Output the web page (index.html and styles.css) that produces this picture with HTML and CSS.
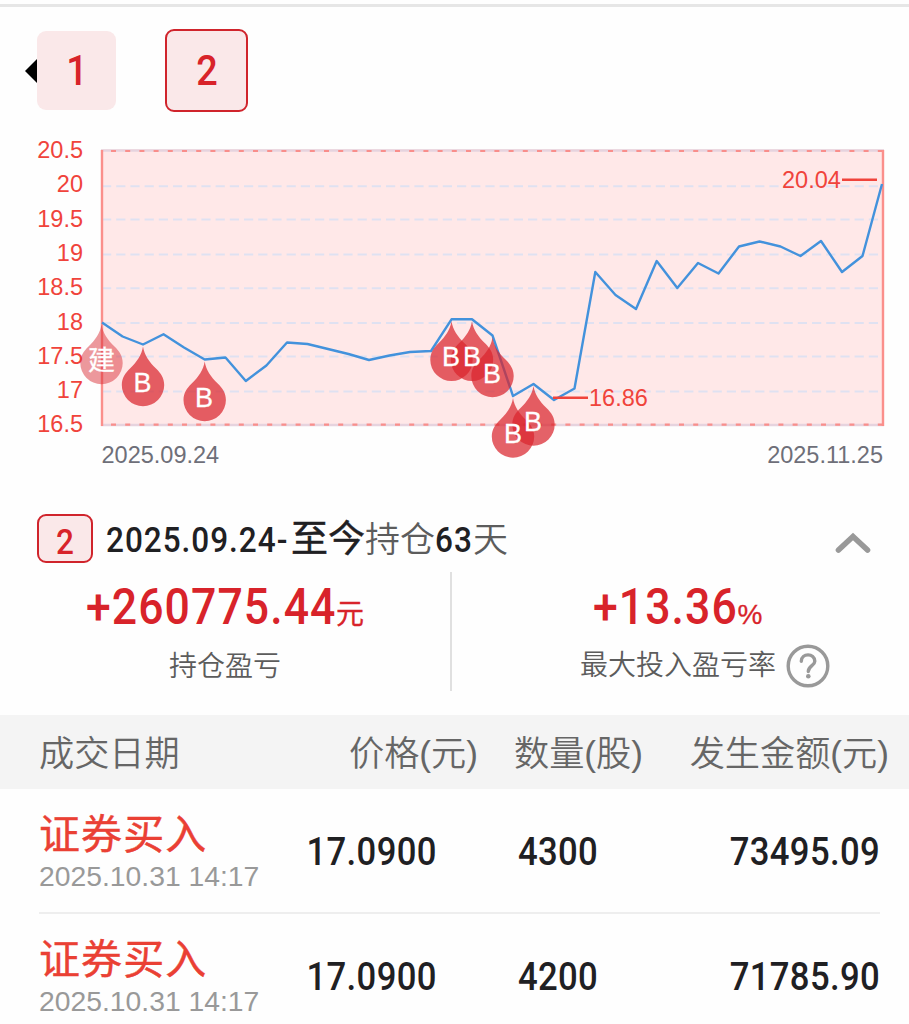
FILE: index.html
```html
<!DOCTYPE html>
<html lang="zh-CN">
<head>
    <meta charset="UTF-8">
    <meta name="viewport" content="width=device-width, initial-scale=1.0">
    <title>持仓详情</title>
    <link rel="stylesheet" href="styles.css">
</head>
<body>
    <div class="top-line"></div>

    <div class="tabs">
        <span class="arrow"></span>
        <div class="tab"><span class="din">1</span></div>
        <div class="tab active"><span class="din">2</span></div>
    </div>

    <svg class="chart" viewBox="0 130 909 350" width="909" height="350">
        <defs>
            <path id="drop" d="M0 2C1.5 11 6 17 13 24C18 29 21.2 33.5 21.2 40.5A21.2 21.2 0 0 1 -21.2 40.5C-21.2 33.5 -18 29 -13 24C-6 17 -1.5 11 0 2Z"/>
        </defs>
        <rect class="plot" x="101" y="149" width="783" height="277"/>
        <path class="grid" d="M102 186.3H882M102 219.5H882M102 254.5H882M102 288.2H882M102 323H882M102 356.5H882M102 391.5H882"/>
        <path class="edge" d="M101 150.5H884M101 425H884"/>
        <path class="edge-dash" d="M111 151H882M111 424.7H882"/>
        <path class="side" d="M102 150V426M883 150V426"/>

        <g class="axis">
            <text x="83" y="158">20.5</text>
            <text x="83" y="192">20</text>
            <text x="83" y="227">19.5</text>
            <text x="83" y="261">19</text>
            <text x="83" y="295">18.5</text>
            <text x="83" y="330">18</text>
            <text x="83" y="364">17.5</text>
            <text x="83" y="398">17</text>
            <text x="83" y="432">16.5</text>
        </g>

        <polyline class="price" points="102,322.5 122.6,336.5 143,344.5 163.5,334.3 184,347.5 204.7,359.5 225.5,357.5 245.8,381 266.4,365.5 287,342.5 307.5,344 328,349 348.5,354 369,360 389.5,355.5 410,352 431,351 451.5,319.3 472,319.3 492.5,335.5 513,396 533.5,384 554,400 574.5,388.5 595.3,272 615.5,295 636,309 656.7,261 677.3,288 698,263 718.5,273.5 739,246.5 759.5,241.5 780.5,246.5 800.5,256 821,241 842,272 862.5,256 882,184"/>

        <use class="pin open" href="#drop" x="101.5" y="322.5"/>
        <use class="pin" href="#drop" x="143" y="344.5"/>
        <use class="pin" href="#drop" x="204.7" y="359.5"/>
        <use class="pin" href="#drop" x="451.5" y="319.3"/>
        <use class="pin" href="#drop" x="472" y="319.3"/>
        <use class="pin" href="#drop" x="492.5" y="335.5"/>
        <use class="pin" href="#drop" x="513" y="396"/>
        <use class="pin" href="#drop" x="533.5" y="384"/>

        <g class="pin-text">
            <text x="101.5" y="370">建</text>
            <text x="142.5" y="391.5">B</text>
            <text x="204" y="406.5">B</text>
            <text x="451" y="366">B</text>
            <text x="472" y="366">B</text>
            <text x="492" y="382.5">B</text>
            <text x="513" y="443">B</text>
            <text x="533" y="430.5">B</text>
        </g>

        <path class="mark" d="M842 179.8H877M553 397.8H588"/>
        <text class="mark-text" x="782" y="188">20.04</text>
        <text class="mark-text" x="589" y="406">16.86</text>

        <text class="date" x="101.5" y="463">2025.09.24</text>
        <text class="date end" x="883" y="463">2025.11.25</text>
    </svg>

    <div class="period">
        <div class="badge"><span class="din">2</span></div>
        <div class="range"><span class="din">2025.09.24-</span><b>至今</b><span class="thin">持仓</span><span class="din days">63</span><span class="thin">天</span></div>
        <svg class="chevron" viewBox="0 0 38 24" width="38" height="24">
            <path d="M4.5 19L19 5.5L33.5 19"/>
        </svg>
    </div>

    <div class="summary">
        <div class="cell left">
            <div class="value"><span class="din amount">+260775.44</span><span class="unit">元</span></div>
            <div class="label">持仓盈亏</div>
        </div>
        <div class="cell right">
            <div class="value"><span class="din rate">+13.36</span><span class="unit">%</span></div>
            <div class="label">最大投入盈亏率
                <svg class="help" viewBox="0 0 44 44" width="44" height="44">
                    <circle cx="22" cy="22" r="19.8"/>
                    <path d="M15.3 17.3C15.3 8.8 28.8 8.8 28.8 17.2C28.8 21.6 22.3 21.8 22.3 27.5"/>
                    <circle class="dot" cx="22.3" cy="32.3" r="2.3"/>
                </svg>
            </div>
        </div>
    </div>

    <div class="row head">
        <div>成交日期</div>
        <div class="num">价格(元)</div>
        <div class="num">数量(股)</div>
        <div class="num">发生金额(元)</div>
    </div>
    <div class="list">
        <div class="row">
            <div>
                <div class="type">证券买入</div>
                <div class="time">2025.10.31 14:17</div>
            </div>
            <div class="num"><span class="din">17.0900</span></div>
            <div class="num"><span class="din">4300</span></div>
            <div class="num"><span class="din">73495.09</span></div>
        </div>
        <div class="row">
            <div>
                <div class="type">证券买入</div>
                <div class="time">2025.10.31 14:17</div>
            </div>
            <div class="num"><span class="din">17.0900</span></div>
            <div class="num"><span class="din">4200</span></div>
            <div class="num"><span class="din">71785.90</span></div>
        </div>
    </div>
</body>
</html>
```
FILE: styles.css
```css
* {
    box-sizing: border-box;
}
body {
    margin: 0;
    height: 1024px;
    overflow: hidden;
    background: #fefefe;
    font-family: "Liberation Sans", "Noto Sans CJK SC", sans-serif;
    color: #1f2023;
}
.din {
    display: inline-block;
    font-family: Roboto, sans-serif;
    font-weight: 500;
    transform: scaleX(0.9);
    transform-origin: left center;
    white-space: nowrap;
}
.top-line {
    height: 3px;
    margin-top: 4px;
    background: #e6e6e6;
}

/* tabs */
.tabs {
    display: flex;
    align-items: flex-start;
    height: 123px;
    padding: 22px 0 0 25px;
}
.arrow {
    margin-top: 30px;
    border: 12px solid transparent;
    border-left: 0;
    border-right-color: #000;
}
.tab {
    width: 79px;
    height: 79px;
    margin-top: 2px;
    border-radius: 9px;
    background: #fae8e9;
    color: #d8232a;
    font-size: 42px;
    line-height: 80px;
    text-align: center;
}
.tab .din {
    transform-origin: center;
}
.tab.active {
    width: 83px;
    height: 83px;
    margin: 0 0 0 49px;
    border: 2px solid #d0242c;
}

/* chart */
.chart {
    display: block;
    font-size: 23.5px;
}
.plot {
    fill: #ffe8e8;
}
.grid {
    fill: none;
    stroke: #dfe1f1;
    stroke-width: 2;
    stroke-dasharray: 9.2 5;
}
.edge {
    stroke: #e6d3de;
    stroke-width: 2.5;
}
.edge-dash {
    stroke: #f98e8b;
    stroke-width: 2.2;
    stroke-dasharray: 5 9.2;
}
.side {
    stroke: #fb8f8b;
    stroke-width: 2.4;
}
.axis {
    fill: #f0433b;
    text-anchor: end;
}
.price {
    fill: none;
    stroke: #4392dc;
    stroke-width: 2.4;
    stroke-linejoin: round;
}
.pin {
    fill: #d9262e;
    fill-opacity: 0.72;
}
.pin.open {
    fill-opacity: 0.47;
}
.pin-text {
    fill: #fff;
    stroke: #fff;
    stroke-width: 0.3;
    font-size: 27px;
    text-anchor: middle;
}
.mark {
    stroke: #f0433b;
    stroke-width: 2.5;
}
.mark-text {
    fill: #f0433b;
}
.date {
    fill: #6e6f79;
}
.date.end {
    text-anchor: end;
}

/* period title */
.period {
    display: flex;
    align-items: center;
    height: 92px;
    padding: 24px 37px 0;
}
.badge {
    width: 56px;
    height: 49px;
    margin-top: 1px;
    border: 2px solid #d0242c;
    border-radius: 9px;
    background: #fae8e9;
    color: #d8232a;
    font-size: 35px;
    line-height: 51px;
    text-align: center;
}
.badge .din {
    transform-origin: center;
}
.range {
    display: flex;
    align-items: baseline;
    margin: 5px auto 0 13px;
    font-size: 36px;
    line-height: 50px;
    white-space: nowrap;
}
.range .din {
    width: 185px;
    font-size: 35px;
    letter-spacing: 1.1px;
}
.range .days {
    width: 38px;
}
.range b {
    font-weight: 400;
    font-size: 37px;
    -webkit-text-stroke: 0.5px #1f2023;
}
.thin {
    font-size: 35px;
    font-weight: 350;
    color: #5c5c5c;
}
.chevron {
    margin: 9px 0 0;
}
.chevron path {
    fill: none;
    stroke: #999;
    stroke-width: 5.6;
    stroke-linecap: round;
}

/* summary */
.summary {
    display: flex;
    height: 143px;
}
.cell {
    flex: 1;
    height: 119px;
    display: flex;
    flex-direction: column;
    align-items: center;
}
.cell.left {
    flex: 0 0 450px;
}
.cell.right {
    border-left: 2px solid #e0e0e0;
    padding-left: 49px;
}
.value {
    display: flex;
    align-items: baseline;
    height: 70px;
    line-height: 70px;
    color: #d8232a;
    font-size: 49.5px;
}
.value .din {
    letter-spacing: 1.2px;
}
.amount {
    width: 250px;
}
.rate {
    width: 145px;
}
.cell.right .value {
    margin-right: 55px;
}
.unit {
    font-size: 28px;
    -webkit-text-stroke: 0.3px #d8232a;
}
.label {
    display: flex;
    align-items: center;
    height: 43px;
    gap: 10px;
    font-size: 28px;
    font-weight: 350;
    color: #5c5c5c;
}
.cell.right .label {
    height: 48px;
    line-height: 44px;
}
.help {
    fill: none;
    stroke: #999;
    stroke-width: 3.4;
    stroke-linecap: round;
}
.help .dot {
    fill: #999;
    stroke: none;
}

/* trade list */
.row {
    display: grid;
    grid-template-columns: 250px 148px 161px 282px;
    height: 125px;
    align-items: center;
}
.num {
    text-align: right;
}
.row.head {
    height: 74px;
    padding: 0 0 4px 39px;
    grid-template-columns: 250px 189px 165px 246px;
    background: #f4f4f4;
    color: #666;
    font-size: 35.2px;
    font-weight: 350;
    white-space: nowrap;
}
.list {
    padding: 0 29px 0 39px;
}
.list .row {
    border-bottom: 2px solid #eee;
}
.list .num {
    font-size: 38.5px;
    padding-top: 1px;
}
.list .din {
    letter-spacing: 0.4px;
    transform-origin: right center;
}
.type {
    padding-top: 4px;
    font-size: 41px;
    line-height: 46px;
    letter-spacing: 1.1px;
    color: #ea4034;
    -webkit-text-stroke: 0.4px #ea4034;
}
.time {
    font-size: 28.3px;
    line-height: 36px;
    color: #999;
}
```
